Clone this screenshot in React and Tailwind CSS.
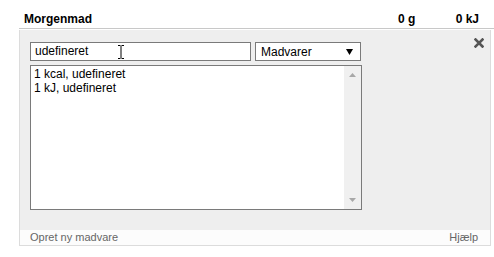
import React from "react";

const Caret = () => (
  <svg width="8" height="16" viewBox="0 0 8 16" className="absolute left-[86px] top-[1px]">
    <path d="M1 1.5h2.5M4.5 1.5H7M4 2v12M1 14.5h2.5M4.5 14.5H7" stroke="#000" strokeWidth="1" fill="none" />
  </svg>
);

export default function App() {
  return (
    <div className="w-[494px] h-[257px] bg-white font-['Liberation_Sans',sans-serif] text-[12px] text-black">
      <div className="ml-[19px] pt-[9px]">
        {/* Header */}
        <div className="flex items-center h-[20px] pl-[5px] pr-[15px] border-b border-[#c8c8c8] font-bold">
          <span className="flex-1">Morgenmad</span>
          <span className="w-[40px]">0 g</span>
          <span className="w-[41px] text-right">0 kJ</span>
        </div>

        {/* Panel */}
        <div className="mt-[1px] mr-[3px] bg-[#eeeeee] border-l border-r border-b border-[#dcdcdc]">
          <div className="relative pl-[10px] pt-[12px] pb-[20px]">
            <button className="absolute right-[6px] top-[8px]">
              <svg width="10" height="10" viewBox="0 0 10 10">
                <path d="M1.5 1.5l7 7M8.5 1.5l-7 7" stroke="#555" strokeWidth="2.6" strokeLinecap="square" />
              </svg>
            </button>

            <div className="flex gap-[4px]">
              <div className="relative w-[221px] h-[19px] bg-white border border-[#7a7a7a] pl-[4px] leading-[17px]">
                udefineret
                <Caret />
              </div>
              <div className="flex items-center justify-between w-[106px] h-[19px] bg-white border border-[#7a7a7a] pl-[5px] pr-[7px]">
                <span>Madvarer</span>
                <svg width="7" height="6" viewBox="0 0 7 6">
                  <path d="M0 0h7L3.5 6z" fill="#000" />
                </svg>
              </div>
            </div>

            <div className="mt-[4px] flex w-[332px] h-[145px] bg-white border border-[#7a7a7a]">
              <div className="flex-1 pl-[3px] pt-[1px] leading-[14px]">
                <div>1 kcal, udefineret</div>
                <div>1 kJ, udefineret</div>
              </div>
              <div className="w-[17px] bg-[#f0f0f0] flex flex-col items-center justify-between py-[7px]">
                <svg width="7" height="4" viewBox="0 0 7 4">
                  <path d="M0 4h7L3.5 0z" fill="#a8a8a8" />
                </svg>
                <svg width="7" height="4" viewBox="0 0 7 4">
                  <path d="M0 0h7L3.5 4z" fill="#a8a8a8" />
                </svg>
              </div>
            </div>
          </div>

          <div className="flex justify-between items-center h-[15px] bg-[#fcfcfc] pl-[10px] pr-[12px] text-[11px] text-[#666]">
            <span>Opret ny madvare</span>
            <span>Hjælp</span>
          </div>
        </div>
      </div>
    </div>
  );
}
